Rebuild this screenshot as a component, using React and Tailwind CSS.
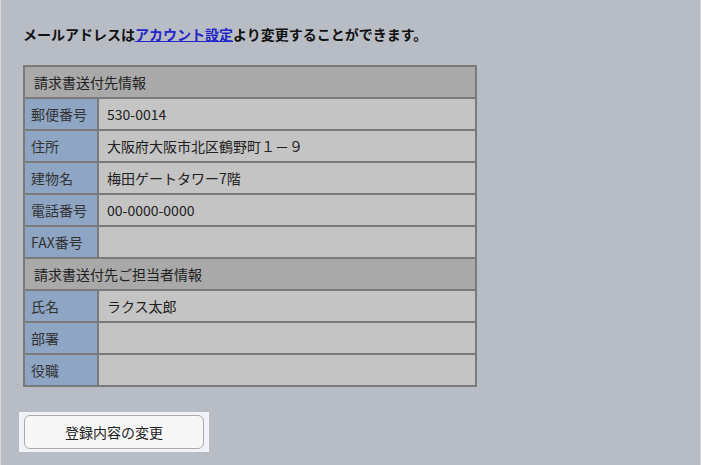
import React from 'react';

const billing = [
  ['郵便番号', '530-0014'],
  ['住所', '大阪府大阪市北区鶴野町１－９'],
  ['建物名', '梅田ゲートタワー7階'],
  ['電話番号', '00-0000-0000'],
  ['FAX番号', ''],
];

const contact = [
  ['氏名', 'ラクス太郎'],
  ['部署', ''],
  ['役職', ''],
];

function SectionRow({ title }) {
  return (
    <tr className="h-[32px]">
      <td colSpan={2} className="border-2 border-[#7a7a7a] bg-[#a9a9a9] px-[9px] text-[#222]">
        {title}
      </td>
    </tr>
  );
}

function FieldRow({ label, value }) {
  return (
    <tr className="h-[32px]">
      <td className="w-[74px] border-2 border-[#7a7a7a] bg-[#8ea6c4] px-[6px] text-[#333]">{label}</td>
      <td className="border-2 border-[#7a7a7a] bg-[#c4c4c4] px-[8px] text-[#222]">{value}</td>
    </tr>
  );
}

export default function App() {
  return (
    <div
      className="min-h-[465px] w-[701px] border-x border-[#d6d8de] bg-[#b8bcc4] px-[22px] pt-[24px] text-[14px]"
      style={{ fontFamily: '"Noto Sans CJK JP", "Noto Sans", sans-serif' }}
    >
      <p className="font-bold leading-[20px] text-[#111]">
        メールアドレスは<a href="#" className="text-[#2326c8] underline">アカウント設定</a>より変更することができます。
      </p>

      <table className="mt-[21px] w-[454px] border-collapse leading-[20px]">
        <tbody>
          <SectionRow title="請求書送付先情報" />
          {billing.map(([l, v]) => <FieldRow key={l} label={l} value={v} />)}
          <SectionRow title="請求書送付先ご担当者情報" />
          {contact.map(([l, v]) => <FieldRow key={l} label={l} value={v} />)}
        </tbody>
      </table>

      <div className="mt-[25px] inline-block bg-[#f1f3f9] px-[5px] py-[3px] -ml-[4px]">
        <button className="h-[34px] w-[180px] rounded-[6px] border border-[#a9a9a9] bg-[#f7f7f7] text-[14px] text-[#222]">
          登録内容の変更
        </button>
      </div>
    </div>
  );
}
